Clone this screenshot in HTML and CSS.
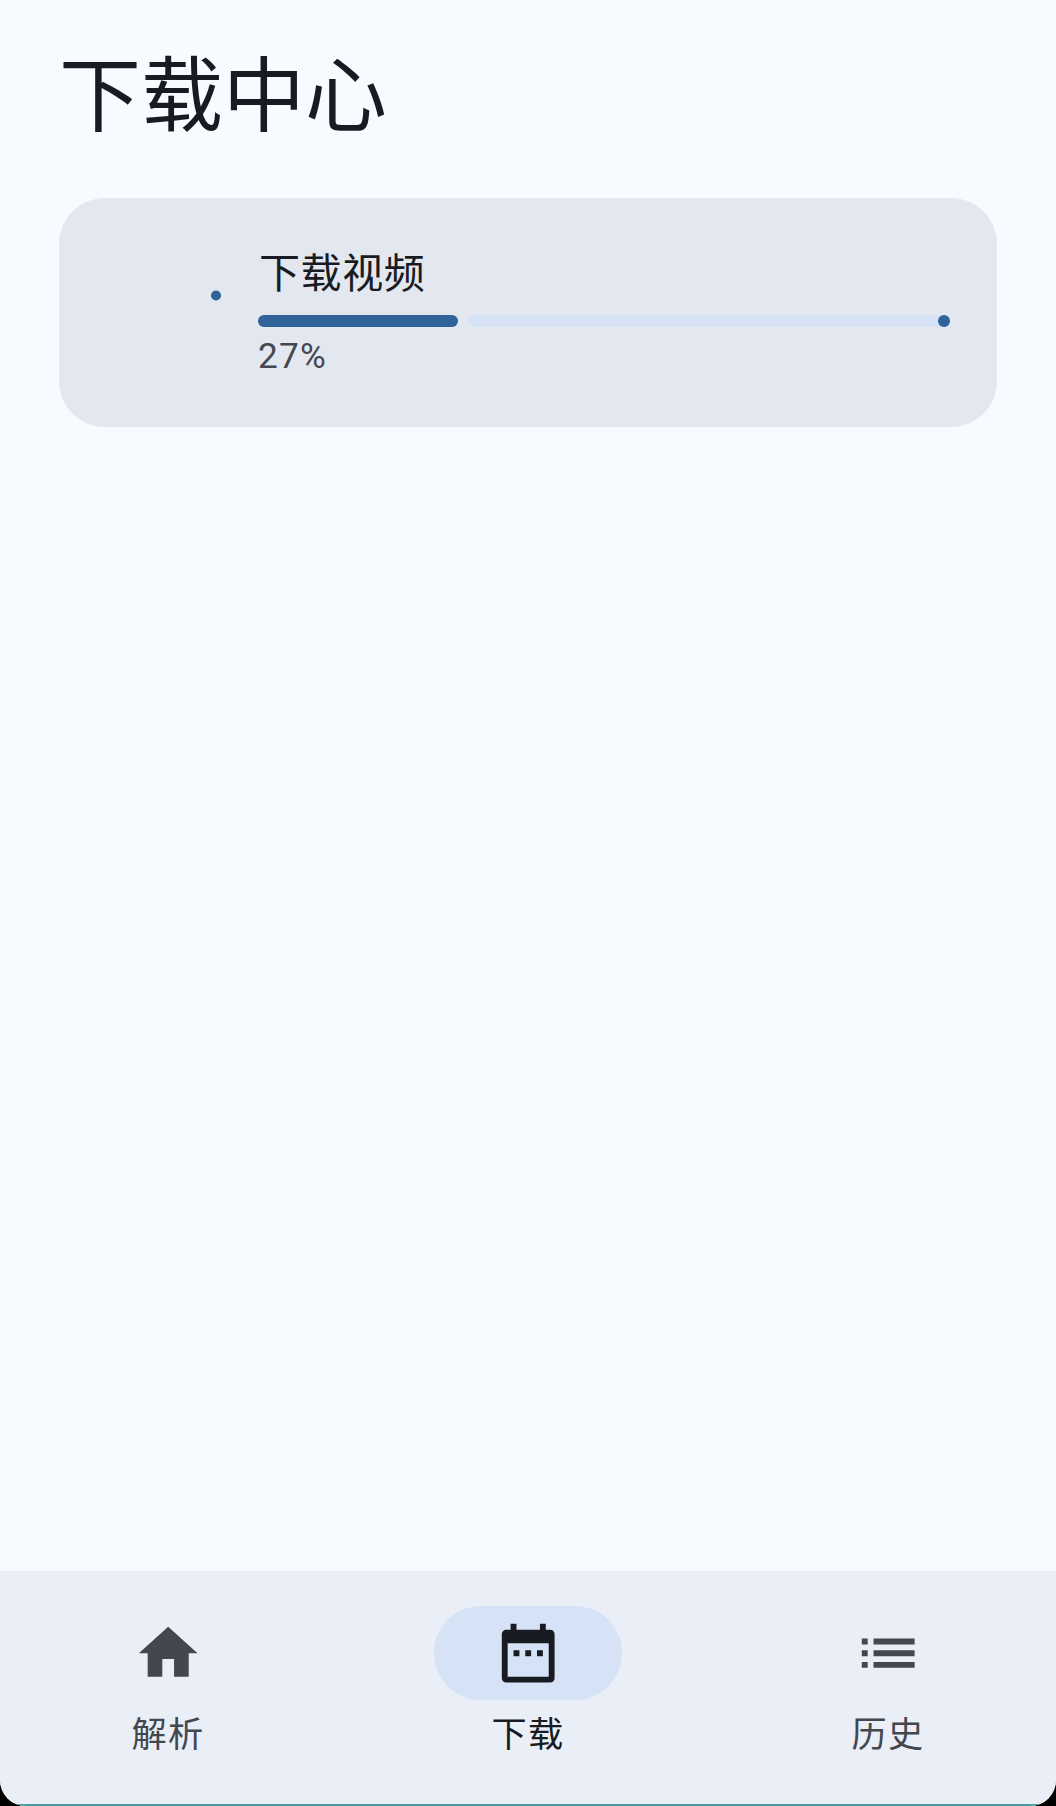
FILE: index.html
```html
<!DOCTYPE html>
<html lang="zh">
  <head>
    <meta charset="utf-8">
    <title>下载中心</title>
    <link rel="stylesheet" href="styles.css">
  </head>
  <body>
    <div class="app">
      <main class="content">
        <h1 class="page-title">下载中心</h1>

        <div class="task-card">
          <svg class="spinner" viewBox="0 0 117 117">
            <circle cx="110" cy="41.5" r="5" fill="#2f6399"></circle>
          </svg>
          <div class="task-info">
            <div class="task-name">下载视频</div>
            <div class="progress">
              <div class="progress-fill"></div>
              <div class="progress-track">
                <div class="progress-stop"></div>
              </div>
            </div>
            <div class="task-percent">27%</div>
          </div>
        </div>
      </main>

      <nav class="bottom-nav">
        <div class="nav-item">
          <div class="nav-icon">
            <svg viewBox="0 0 24 24">
              <path d="M10 20v-6h4v6h5v-8h3L12 3 2 12h3v8z"></path>
            </svg>
          </div>
          <div class="nav-label">解析</div>
        </div>
        <div class="nav-item active">
          <div class="nav-icon">
            <svg viewBox="0 0 24 24">
              <path fill-rule="evenodd" d="M6 2h2v2h8V2h2v2h1.5A1.5 1.5 0 0 1 21 5.5v15a1.5 1.5 0 0 1-1.5 1.5h-15A1.5 1.5 0 0 1 3 20.500v-15A1.500 1.500 0 0 1 4.500 4H6zM5 8.600V20h14V8.600zM7 11h2v2H7zm4 0h2v2h-2zm4 0h2v2h-2z"></path>
            </svg>
          </div>
          <div class="nav-label">下载</div>
        </div>
        <div class="nav-item">
          <div class="nav-icon">
            <svg viewBox="0 0 24 24">
              <path d="M3 13h2v-2H3v2zm0 4h2v-2H3v2zm0-8h2V7H3v2zm4 4h14v-2H7v2zm0 4h14v-2H7v2zM7 7v2h14V7H7z"></path>
            </svg>
          </div>
          <div class="nav-label">历史</div>
        </div>
      </nav>
    </div>
  </body>
</html>
```

FILE: styles.css
```css
html,
body {
  margin: 0;
  padding: 0;
  height: 100%;
  background-color: #000;
}

body {
  font-family: Roboto, "Noto Sans CJK SC", sans-serif;
  color: #181c22;
}

.app {
  display: flex;
  flex-direction: column;
  height: 1806px;
  overflow: hidden;
  border-radius: 0 0 26px 26px;
  background-color: #f5fbff;
}

.content {
  flex: 1;
  padding: 45px 59px 0 59px;
}

.page-title {
  margin: 0 0 48px 0;
  font-size: 82px;
  font-weight: 400;
  line-height: 105px;
}

.task-card {
  display: flex;
  align-items: center;
  gap: 35px;
  padding: 47px 47px 47px 47px;
  border-radius: 46px;
  background-color: #e3e7f0;
}

.spinner {
  flex: none;
  width: 117px;
  height: 117px;
}

.task-info {
  flex: 1;
  min-width: 0;
}

.task-name {
  font-size: 41px;
  line-height: 58px;
  letter-spacing: 0.6px;
  text-indent: 1px;
}

.progress {
  display: flex;
  gap: 10px;
  height: 12px;
  margin-top: 12px;
}

.progress-fill {
  width: 200px;
  border-radius: 6px;
  background-color: #2f6399;
}

.progress-track {
  flex: 1;
  position: relative;
  border-radius: 6px;
  background-color: #d6e3f7;
}

.progress-stop {
  position: absolute;
  top: 0;
  right: 0;
  width: 12px;
  height: 12px;
  border-radius: 50%;
  background-color: #2f6399;
}

.task-percent {
  margin-top: 6px;
  font-size: 35.2px;
  line-height: 47px;
  letter-spacing: 1.17px;
  color: #43474f;
}

.bottom-nav {
  flex: none;
  display: flex;
  justify-content: space-between;
  height: 233px;
  padding: 0 74px;
  border-bottom: 2px solid #4b9aa3;
  background-color: #e9eef7;
}

.nav-item {
  width: 188px;
  padding-top: 35px;
  text-align: center;
  color: #43474f;
}

.nav-icon {
  display: flex;
  align-items: center;
  justify-content: center;
  height: 94px;
  border-radius: 47px;
}

.nav-icon svg {
  width: 70.4px;
  height: 70.4px;
  fill: currentColor;
}

.nav-label {
  margin-top: 12px;
  font-size: 35.2px;
  line-height: 47px;
  letter-spacing: 1.4px;
}

.nav-item.active {
  color: #181c22;
}

.nav-item.active .nav-icon {
  background-color: #d6e3f7;
}
```
